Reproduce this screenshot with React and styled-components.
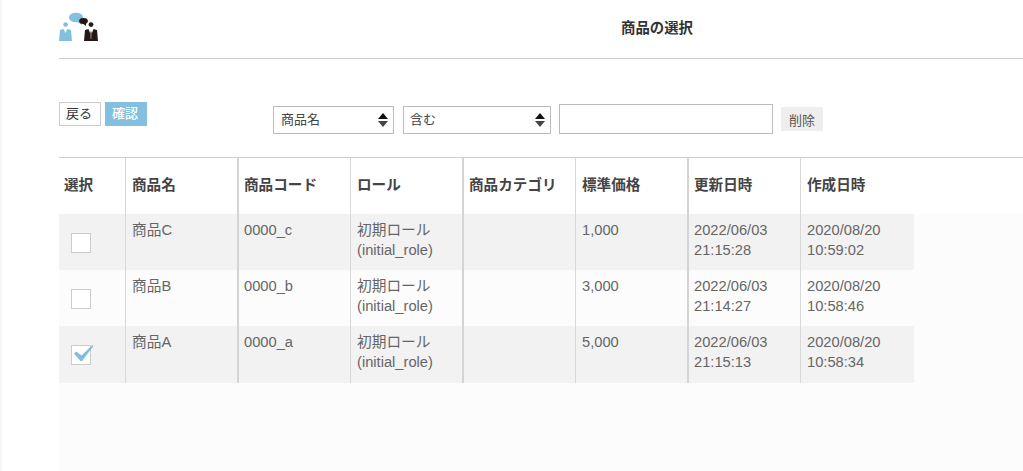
import React from "react";
import styled, { createGlobalStyle } from "styled-components";

const Global = createGlobalStyle`
  html, body { margin: 0; padding: 0; background: #fff; }
  body { font-family: "Liberation Sans", "Noto Sans CJK JP", sans-serif; color: #555; overflow: hidden; }
`;

const Page = styled.div`
  width: 1023px; height: 471px; box-sizing: border-box; padding-left: 57px;
  border-left: 2px solid #f7f7f7; display: flex; flex-direction: column; overflow: hidden;
`;
const Header = styled.header`
  height: 58px; flex: none; border-bottom: 1px solid #ccc; position: relative; display: flex; align-items: flex-start;
  justify-content: center;
`;
const LogoBox = styled.div`
  position: absolute; left: 0; top: 12px; width: 40px; height: 29px;
`;
const Title = styled.h1`
  margin: 18px 0 0 232px; font-size: 14.4px; line-height: 20px; font-weight: 700; color: #333;
`;
const Toolbar = styled.div`
  height: 98px; flex: none; box-sizing: border-box; display: flex; align-items: flex-start;
`;
const Actions = styled.div`
  display: flex; gap: 4px; margin-top: 43px; width: 214px;
`;
const BackButton = styled.button`
  width: 42px; height: 24px; box-sizing: border-box; border: 1px solid #ccc; background: #fff; color: #333;
  font: 13px/20px "Liberation Sans", "Noto Sans CJK JP", sans-serif; padding: 0 2px 0 0;
`;
const ConfirmButton = styled.button`
  width: 42px; height: 24px; border: 0; background: #83bfdf; color: #fff; padding: 0 2px 0 0;
  font: 500 13px/20px "Liberation Sans", "Noto Sans CJK JP", sans-serif;
`;
const Filters = styled.div`
  display: flex; align-items: flex-start; margin-top: 44px;
`;
const SelectBox = styled.div`
  width: ${p => p.$w}px; height: 28px; box-sizing: border-box; border: 1px solid #bbb; margin-right: ${p => p.$mr}px;
  margin-top: 3px; display: flex; align-items: center; justify-content: space-between; padding: 0 5px 3px ${p => p.$pl}px;
  font-size: 13px; color: #444; background: #fff;
`;
const TextInput = styled.input`
  width: 214px; height: 30px; box-sizing: border-box; border: 1px solid #bbb; background: #fff; margin-right: 8px; margin-top: 1px; padding: 0;
`;
const ClearButton = styled.button`
  width: 42px; height: 24px; margin-top: 4px; border: 0; background: #eee; color: #555; padding: 0;
  font: 13px "Liberation Sans", "Noto Sans CJK JP", sans-serif;
`;
const Table = styled.div`
  flex: 1; border-top: 1px solid #d0d0d0; background: linear-gradient(#fff 56px, #fcfcfc 56px);
`;
const Row = styled.div`
  display: flex; height: ${p => p.$h}px; width: 855px; background: ${p => p.$bg}; box-sizing: border-box;
`;
const HeadCell = styled.div`
  width: ${p => p.$w}px; box-sizing: border-box; flex: none; padding: 17px 0 0 ${p => p.$pl}px;
  font-size: 14.6px; line-height: 20px; font-weight: 700; color: #444; white-space: nowrap;
  border-right: ${p => p.$rule}px solid ${p => p.$rule > 1 ? "#d4d4d4" : "#d8d8d8"};
`;
const Cell = styled.div`
  width: ${p => p.$w}px; box-sizing: border-box; flex: none; padding: 6px 0 0 ${p => p.$pl}px;
  font-size: 14.7px; line-height: 20px; color: #666; white-space: nowrap;
  border-right: ${p => p.$rule}px solid ${p => p.$rule > 1 ? "#d4d4d4" : "#d8d8d8"};
`;
const CheckCell = styled.div`
  width: 67px; flex: none; box-sizing: border-box; border-right: 1px solid #d8d8d8; padding: 19px 0 0 12px;
`;
const CheckBox = styled.span`
  display: block; width: 20px; height: 20px; box-sizing: border-box; border: 1px solid #ccc; background: #fff; position: relative;
`;
const Tick = styled.svg`
  position: absolute; left: -1px; top: -1px; width: 24px; height: 20px;
`;
const Arrows = styled.svg`
  width: 10px; height: 16px; flex: none; margin-top: 3px;
`;

const cols = [
  { w: 113, pl: 6, rule: 2 },
  { w: 112, pl: 5, rule: 1 },
  { w: 113, pl: 6, rule: 2 },
  { w: 112, pl: 5, rule: 1 },
  { w: 113, pl: 6, rule: 2 },
  { w: 112, pl: 5, rule: 1 },
  { w: 113, pl: 6, rule: 0 },
];
const heads = ["商品名", "商品コード", "ロール", "商品カテゴリ", "標準価格", "更新日時", "作成日時"];
const rows = [
  { h: 56, bg: "#f2f2f2", checked: false, name: "商品C", code: "0000_c", price: "1,000", up: "21:15:28", cr: "10:59:02" },
  { h: 56, bg: "#fcfcfc", checked: false, name: "商品B", code: "0000_b", price: "3,000", up: "21:14:27", cr: "10:58:46" },
  { h: 57, bg: "#f2f2f2", checked: true, name: "商品A", code: "0000_a", price: "5,000", up: "21:15:13", cr: "10:58:34" },
];

const Logo = () => (
  <svg width="40" height="29" viewBox="0 0 40 29">
    <ellipse cx="17" cy="5.5" rx="7" ry="4.8" fill="#83bfdf" />
    <path d="M17 9 L23 9 L23 13 Z" fill="#83bfdf" />
    <ellipse cx="24.5" cy="9" rx="4.4" ry="3" fill="#231815" />
    <path d="M23 11 L27 11 L27 14 Z" fill="#231815" />
    <circle cx="6.6" cy="12.6" r="2.3" fill="#83bfdf" />
    <path d="M0 29 L1 18 L4.5 17 L6.5 21 L8.5 17 L12 18 L13 29 Z" fill="#83bfdf" />
    <circle cx="32" cy="12.6" r="2.4" fill="#231815" />
    <path d="M25 29 L26 18 L29.5 17 L31 21 L32 19 L33 21 L34.5 17 L38 18 L39 29 Z" fill="#231815" />
    <path d="M31 21 L32 19 L33 21 L32.6 27 L31.4 27 Z" fill="#fff" opacity="0.35" />
  </svg>
);

const ArrowIcon = () => (
  <Arrows viewBox="0 0 10 16">
    <path d="M5 1 L10 7 H0 Z" fill="#111" />
    <path d="M5 15 L10 9 H0 Z" fill="#444" />
  </Arrows>
);

export default function App() {
  return (
    <Page>
      <Global />
      <Header>
        <LogoBox><Logo /></LogoBox>
        <Title>商品の選択</Title>
      </Header>
      <Toolbar>
        <Actions>
          <BackButton>戻る</BackButton>
          <ConfirmButton>確認</ConfirmButton>
        </Actions>
        <Filters>
          <SelectBox $w={121} $mr={9} $pl={7}>商品名<ArrowIcon /></SelectBox>
          <SelectBox $w={148} $mr={8} $pl={6}>含む<ArrowIcon /></SelectBox>
          <TextInput />
          <ClearButton>削除</ClearButton>
        </Filters>
      </Toolbar>
      <Table>
        <Row $h={56} $bg="transparent">
          <HeadCell $w={67} $pl={5} $rule={1}>選択</HeadCell>
          {heads.map((h, i) => <HeadCell key={h} $w={cols[i].w} $pl={cols[i].pl} $rule={cols[i].rule}>{h}</HeadCell>)}
        </Row>
        {rows.map(r => {
          const vals = [r.name, r.code, <>初期ロール<br />(initial_role)</>, "", r.price, <>2022/06/03<br />{r.up}</>, <>2020/08/20<br />{r.cr}</>];
          return (
            <Row key={r.name} $h={r.h} $bg={r.bg}>
              <CheckCell>
                <CheckBox>
                  {r.checked && (
                    <Tick viewBox="0 0 24 20"><path d="M3 8.5 L5 6.5 L10.5 10.5 L21.5 0 L22.5 1 L11 16 L9.5 16 Z" fill="#7dbde0" /></Tick>
                  )}
                </CheckBox>
              </CheckCell>
              {vals.map((v, i) => <Cell key={i} $w={cols[i].w} $pl={cols[i].pl} $rule={cols[i].rule}>{v}</Cell>)}
            </Row>
          );
        })}
      </Table>
    </Page>
  );
}
